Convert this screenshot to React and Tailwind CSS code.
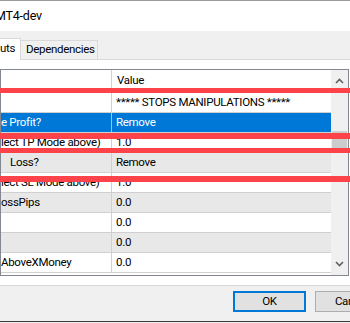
import React from "react";

const rows = [
  { name: "", value: "***** STOPS MANIPULATIONS *****" },
  { name: "e Profit?", value: "Remove", selected: true },
  { name: "lect TP Mode above)", value: "1.0" },
  { name: "Loss?", value: "Remove", pad: true },
  { name: "lect SL Mode above)", value: "1.0" },
  { name: "ossPips", value: "0.0" },
  { name: "", value: "0.0" },
  { name: "", value: "0.0" },
  { name: "AboveXMoney", value: "0.0" },
];

// red marker strokes drawn over the screenshot
const marks = [
  { top: "top-[88px]", h: "h-[5px]" },
  { top: "top-[133px]", h: "h-[6px]" },
  { top: "top-[148px]", h: "h-[5px]" },
  { top: "top-[176px]", h: "h-[6px]" },
];

const Chevron = ({ down }) => (
  <svg width="9" height="6" viewBox="0 0 9 6" className={down ? "rotate-180" : ""}>
    <path d="M1 5 L4.5 1.5 L8 5" fill="none" stroke="#606060" strokeWidth="1.6" />
  </svg>
);

export default function App() {
  return (
    <div className="relative w-[350px] h-[323px] overflow-hidden bg-[#f0f0f0] font-['Roboto',sans-serif] text-[11.5px] tracking-[-0.3px] text-black">
      {/* title bar */}
      <div className="h-[31px] bg-white border-t border-[#9a9a9a] flex items-center">
        <span className="-ml-[5px] text-[12.5px] tracking-[-0.2px]">MT4-dev</span>
      </div>

      {/* tabs */}
      <div className="h-[28px] flex items-end">
        <div className="w-[21px] h-[22px] bg-white border-t border-r border-[#d9d9d9] flex items-center relative top-[1px]">
          <span className="pb-[2px]">uts</span>
        </div>
        <div className="w-[77px] h-[19px] border-t border-r border-[#d9d9d9] flex items-center pl-[5px] pb-[1px]">
          Dependencies
        </div>
      </div>

      {/* tab panel */}
      <div className="h-[227px] bg-white border-t border-b border-[#d9d9d9] pt-[9px] pr-[1px]">
        <div className="h-[207px] border border-[#828790] flex">
          <div className="flex-1 flex flex-col">
            <div className="h-[23px] flex border-b border-[#d0d0d0]">
              <div className="w-[111px] border-r border-[#d0d0d0]" />
              <div className="pl-[5px] flex items-center">Value</div>
            </div>
            {rows.map((r, i) => (
              <div
                key={i}
                className={`h-[20px] flex border-b border-[#d0d0d0] ${
                  r.selected ? "bg-[#0078d7] text-white" : i % 2 === 1 ? "bg-[#e8e8e8]" : "bg-white"
                }`}
              >
                <div
                  className={`w-[111px] border-r ${r.selected ? "border-[#9cc3ea]" : "border-[#d0d0d0]"} flex items-center whitespace-nowrap overflow-hidden ${
                    r.pad ? "pl-[9px]" : ""
                  }`}
                >
                  {r.name}
                </div>
                <div className="pl-[4px] flex items-center whitespace-nowrap">{r.value}</div>
              </div>
            ))}
          </div>
          <div className="w-[17px] bg-[#f0f0f0] flex flex-col items-center">
            <div className="h-[20px] flex items-center justify-center pt-[2px]">
              <Chevron />
            </div>
            <div className="mt-[41px] w-[15px] h-[20px] bg-[#cdcdcd]" />
            <div className="flex-1" />
            <div className="h-[20px] flex items-center justify-center pb-[2px]">
              <Chevron down />
            </div>
          </div>
        </div>
      </div>

      {/* buttons */}
      <div className="h-[35px] flex items-start pt-[5px] pl-[233px] gap-[9px]">
        <button className="w-[73px] h-[21px] shrink-0 bg-[#e1e1e1] border-2 border-[#0078d7] flex items-center justify-center">
          OK
        </button>
        <button className="w-[73px] h-[21px] shrink-0 bg-[#e1e1e1] border border-[#adadad] flex items-center justify-center">
          Cancel
        </button>
      </div>
      <div className="h-[1px] bg-[#3c3c3c]" />

      {marks.map((m, i) => (
        <div key={i} className={`absolute left-0 w-full bg-[#fc4349] ${m.top} ${m.h}`} />
      ))}
    </div>
  );
}
